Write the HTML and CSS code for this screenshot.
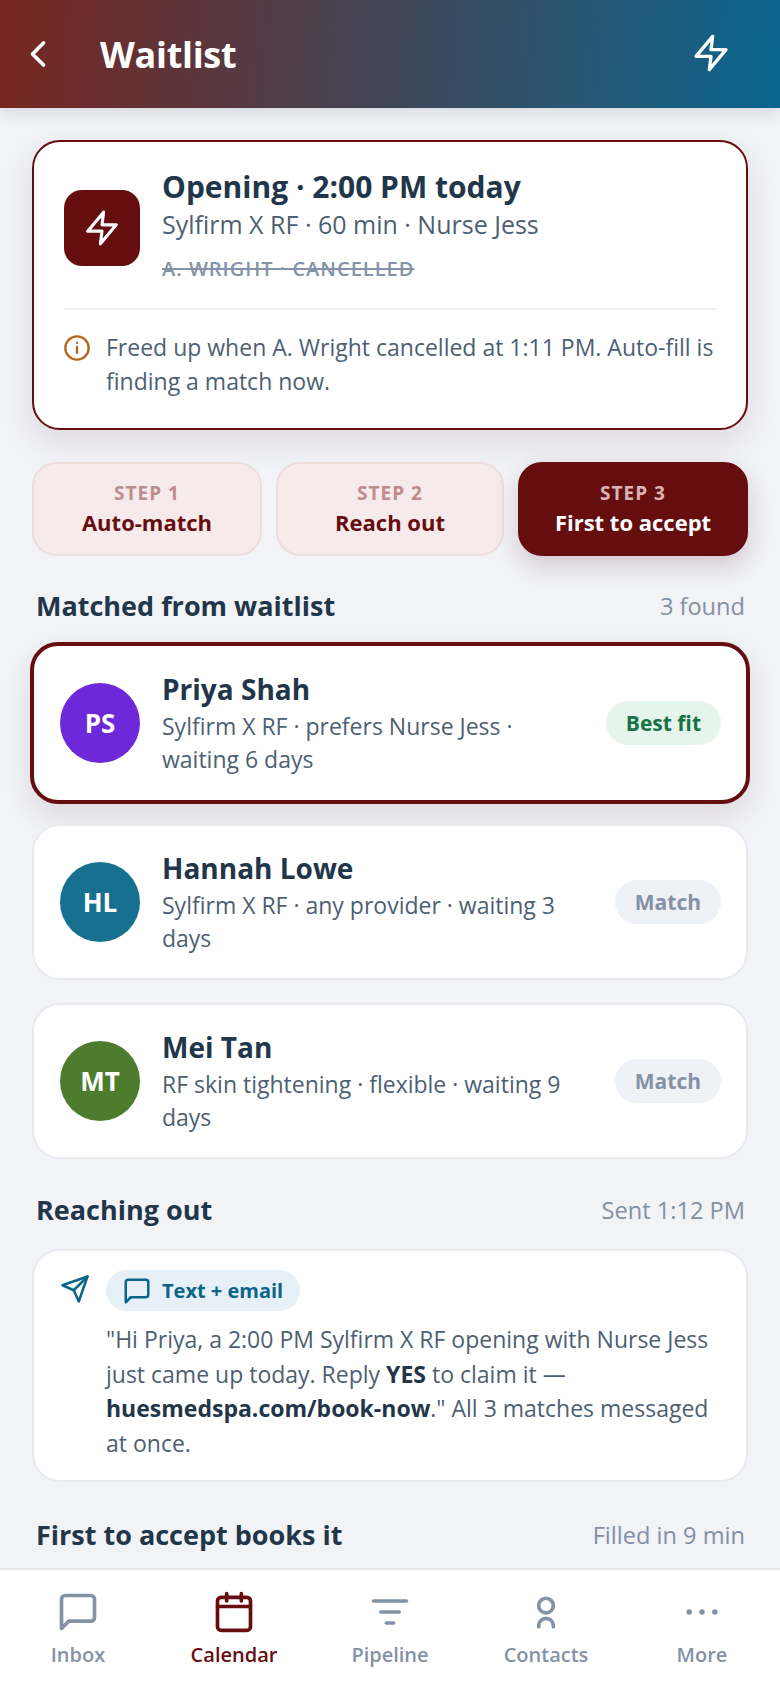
FILE: index.html
```html
<!DOCTYPE html>
<html>
<head>
	<meta charset="utf-8">
	<title>Waitlist</title>
	<link rel="stylesheet" href="styles.css">
</head>
<body>
	<div class="screen">
		<div class="topbar">
			<svg class="back_icon" viewBox="0 0 24 24"><path d="M15 18l-6-6 6-6"/></svg>
			<div class="topbar_title">Waitlist</div>
			<svg class="zap_icon" viewBox="0 0 24 24"><polygon points="13 2 3 14 12 14 11 22 21 10 12 10 13 2"/></svg>
		</div>

		<div class="content">
			<div class="hero">
				<div class="hero_top">
					<div class="hero_badge">
						<svg viewBox="0 0 24 24"><polygon points="13 2 3 14 12 14 11 22 21 10 12 10 13 2"/></svg>
					</div>
					<div>
						<div class="hero_title">Opening · 2:00 PM today</div>
						<div class="hero_sub">Sylfirm X RF · 60 min · Nurse Jess</div>
						<div class="hero_cancel">A. WRIGHT · CANCELLED</div>
					</div>
				</div>
				<div class="hero_note">
					<svg class="info_icon" viewBox="0 0 24 24"><circle cx="12" cy="12" r="10"/><path d="M12 16v-5M12 7.5v.01"/></svg>
					<p>Freed up when A. Wright cancelled at 1:11 PM. Auto-fill is finding a match now.</p>
				</div>
			</div>

			<div class="steps">
				<div class="step step_1"><span>STEP 1</span><b>Auto-match</b></div>
				<div class="step step_2"><span>STEP 2</span><b>Reach out</b></div>
				<div class="step step_3 step_on"><span>STEP 3</span><b>First to accept</b></div>
			</div>

			<div class="section_head">
				<h2>Matched from waitlist</h2>
				<span>3 found</span>
			</div>

			<div class="person person_top">
				<div class="avatar av_purple">PS</div>
				<div class="person_info">
					<div class="person_name">Priya Shah</div>
					<div class="person_sub">Sylfirm X RF · prefers Nurse Jess · waiting 6 days</div>
				</div>
				<div class="pill pill_green">Best fit</div>
			</div>
			<div class="person">
				<div class="avatar av_teal">HL</div>
				<div class="person_info">
					<div class="person_name">Hannah Lowe</div>
					<div class="person_sub">Sylfirm X RF · any provider · waiting 3 days</div>
				</div>
				<div class="pill">Match</div>
			</div>
			<div class="person">
				<div class="avatar av_green">MT</div>
				<div class="person_info">
					<div class="person_name">Mei Tan</div>
					<div class="person_sub">RF skin tightening · flexible · waiting 9 days</div>
				</div>
				<div class="pill">Match</div>
			</div>

			<div class="section_head head_reach">
				<h2>Reaching out</h2>
				<span>Sent 1:12 PM</span>
			</div>

			<div class="message">
				<svg class="send_icon" viewBox="0 0 24 24"><path d="M22 2L11 13"/><polygon points="22 2 15 22 11 13 2 9 22 2"/></svg>
				<div class="message_body">
					<div class="chip">
						<svg viewBox="0 0 24 24"><path d="M21 15a2 2 0 0 1-2 2H7l-4 4V5a2 2 0 0 1 2-2h14a2 2 0 0 1 2 2z"/></svg>
						Text + email
					</div>
					<p>"Hi Priya, a 2:00 PM Sylfirm X RF opening with Nurse Jess just came up today. Reply <b>YES</b> to claim it — <b>huesmedspa.com/book-now</b>." All 3 matches messaged at once.</p>
				</div>
			</div>

			<div class="section_head head_first">
				<h2>First to accept books it</h2>
				<span>Filled in 9 min</span>
			</div>
		</div>

		<div class="nav">
			<div class="nav_item">
				<svg viewBox="0 0 24 24"><path d="M21 15a2 2 0 0 1-2 2H7l-4 4V5a2 2 0 0 1 2-2h14a2 2 0 0 1 2 2z"/></svg>
				Inbox
			</div>
			<div class="nav_item nav_on">
				<svg viewBox="0 0 24 24"><rect x="3" y="4" width="18" height="18" rx="2"/><path d="M16 2v4M8 2v4M3 9h18"/></svg>
				Calendar
			</div>
			<div class="nav_item">
				<svg viewBox="0 0 24 24"><path d="M3 6h18M7 12h10M10 18h4"/></svg>
				Pipeline
			</div>
			<div class="nav_item">
				<svg viewBox="0 0 24 24"><circle cx="12" cy="8.5" r="4"/><path d="M8 20v-.5a4 4 0 0 1 8 0v.5"/></svg>
				Contacts
			</div>
			<div class="nav_item">
				<svg viewBox="0 0 24 24"><path class="dots" d="M5 12h.01M12 12h.01M19 12h.01"/></svg>
				More
			</div>
		</div>
	</div>
</body>
</html>
```

FILE: styles.css
```css
* {
	box-sizing: border-box;
}

body {
	margin: 0;
	background: #f1f3f7;
	font-family: "Open Sans", "Noto Sans", sans-serif;
	color: #22364a;
}

svg {
	fill: none;
	stroke: currentColor;
	stroke-width: 2;
	stroke-linecap: round;
	stroke-linejoin: round;
	flex-shrink: 0;
}

.screen {
	height: 1688px;
	display: flex;
	flex-direction: column;
	overflow: hidden;
}

.topbar {
	height: 108px;
	flex-shrink: 0;
	display: flex;
	align-items: center;
	padding: 0 49px 0 16px;
	background: linear-gradient(95deg, #78251f 0%, #0a668f 100%);
	color: #fff;
	box-shadow: 0 4px 16px rgba(30, 40, 60, 0.14);
	position: relative;
}

.back_icon {
	width: 44px;
	height: 44px;
}

.topbar_title {
	margin-left: 40px;
	font-size: 36px;
	font-weight: 700;
	letter-spacing: -0.3px;
	flex: 1;
}

.zap_icon {
	width: 40px;
	height: 40px;
	margin-top: -2px;
}

.content {
	flex: 1;
	overflow: hidden;
	padding: 32px 32px 0;
}

.hero {
	height: 290px;
	background: #fff;
	border: 2px solid #660d10;
	border-radius: 28px;
	padding: 25px 30px 0;
	box-shadow: 0 12px 32px rgba(90, 30, 40, 0.12);
}

.hero_top {
	display: flex;
	align-items: flex-start;
	gap: 22px;
	padding-bottom: 24px;
	border-bottom: 2px solid #eef0f3;
}

.hero_badge {
	width: 76px;
	height: 76px;
	margin-top: 23px;
	flex-shrink: 0;
	border-radius: 18px;
	background: #660d10;
	color: #fff;
	display: flex;
	align-items: center;
	justify-content: center;
}

.hero_badge svg {
	width: 38px;
	height: 38px;
}

.hero_title {
	font-size: 30px;
	font-weight: 700;
	line-height: 40px;
}

.hero_sub {
	font-size: 25px;
	line-height: 34px;
	color: #4d5f72;
}

.hero_cancel {
	margin-top: 13px;
	font-size: 20px;
	line-height: 30px;
	font-weight: 600;
	letter-spacing: 1px;
	color: #8493a8;
	text-decoration: line-through;
}

.hero_note {
	display: flex;
	gap: 15px;
	margin-top: 20px;
}

.hero_note p {
	margin: 0;
	font-size: 23px;
	line-height: 34px;
	color: #4d5f72;
}

.info_icon {
	width: 28px;
	height: 28px;
	margin: 4px 0 0 -1px;
	color: #b4661c;
}

.steps {
	display: flex;
	gap: 14px;
	margin-top: 32px;
}

.step {
	height: 94px;
	padding-bottom: 3px;
	border: 2px solid #ecdcdc;
	border-radius: 24px;
	background: #f6eaea;
	color: #660d10;
	display: flex;
	flex-direction: column;
	align-items: center;
	justify-content: center;
}

.step_1 {
	width: 230px;
}

.step_2 {
	width: 228px;
}

.step_3 {
	width: 230px;
}

.step span {
	font-size: 19px;
	line-height: 28px;
	font-weight: 700;
	letter-spacing: 1px;
	color: #bd8d8d;
}

.step b {
	font-size: 22px;
	line-height: 30px;
	font-weight: 700;
}

.step_on {
	background: #660d10;
	border-color: #660d10;
	color: #fff;
	box-shadow: 0 10px 24px rgba(90, 30, 40, 0.2);
}

.step_on span {
	color: #d9b4b4;
}

.section_head {
	display: flex;
	justify-content: space-between;
	align-items: center;
	margin: 30px 3px 16px 4px;
}

.section_head h2 {
	margin: 0;
	font-size: 27px;
	line-height: 40px;
	font-weight: 700;
}

.section_head span {
	font-size: 23.6px;
	color: #8190a3;
}

.head_reach {
	margin-top: 31px;
	margin-bottom: 19px;
}

.head_first {
	margin-top: 33px;
}

.person {
	height: 156px;
	margin-bottom: 23px;
	background: #fff;
	border: 2px solid #e8eaee;
	border-radius: 28px;
	padding: 0 25px 0 26px;
	display: flex;
	align-items: center;
	gap: 22px;
}

.person_top {
	height: 162px;
	margin: 0 -2px 20px;
	border: 4px solid #660d10;
	box-shadow: 0 12px 28px rgba(90, 30, 40, 0.12);
}

.avatar {
	width: 80px;
	height: 80px;
	flex-shrink: 0;
	border-radius: 50%;
	color: #fff;
	font-size: 26px;
	font-weight: 700;
	display: flex;
	align-items: center;
	justify-content: center;
}

.av_purple {
	background: #6d28d9;
}

.av_teal {
	background: #17708f;
}

.av_green {
	background: #4d7c2f;
}

.person_info {
	flex: 1;
}

.person_name {
	font-size: 28px;
	line-height: 36px;
	font-weight: 700;
}

.person_sub {
	margin-top: 3px;
	font-size: 23px;
	line-height: 33px;
	color: #4d5f72;
}

.pill {
	flex-shrink: 0;
	height: 44px;
	padding: 0 20px;
	border-radius: 22px;
	background: #eef1f5;
	color: #8592a6;
	font-size: 21px;
	font-weight: 700;
	display: flex;
	align-items: center;
}

.pill_green {
	background: #e6f5ec;
	color: #177245;
}

.message {
	height: 233px;
	background: #fff;
	border: 2px solid #e8eaee;
	border-radius: 28px;
	padding: 19px 30px 0 26px;
	display: flex;
	gap: 16px;
}

.send_icon {
	width: 30px;
	height: 30px;
	margin-top: 4px;
	color: #0b6489;
}

.chip {
	display: inline-flex;
	align-items: center;
	gap: 10px;
	height: 41px;
	padding: 0 17px 0 16px;
	border-radius: 21px;
	background: #e6f0f6;
	color: #0b6489;
	font-size: 20px;
	font-weight: 700;
}

.chip svg {
	width: 30px;
	height: 30px;
}

.message_body {
	flex: 1;
}

.message_body p {
	margin: 11px 0 0;
	font-size: 23px;
	line-height: 34.5px;
	color: #4d5f72;
}

.message_body b {
	color: #22364a;
}

.nav {
	height: 120px;
	flex-shrink: 0;
	background: #fff;
	border-top: 2px solid #e6e8ec;
	display: flex;
	padding-top: 20px;
}

.nav_item {
	flex: 1;
	display: flex;
	flex-direction: column;
	align-items: center;
	gap: 7px;
	color: #8492a6;
	font-size: 20px;
	font-weight: 600;
}

.nav_item svg {
	width: 44px;
	height: 44px;
}

.nav_item .dots {
	stroke-width: 3;
}

.nav_on {
	color: #660d10;
}
```
